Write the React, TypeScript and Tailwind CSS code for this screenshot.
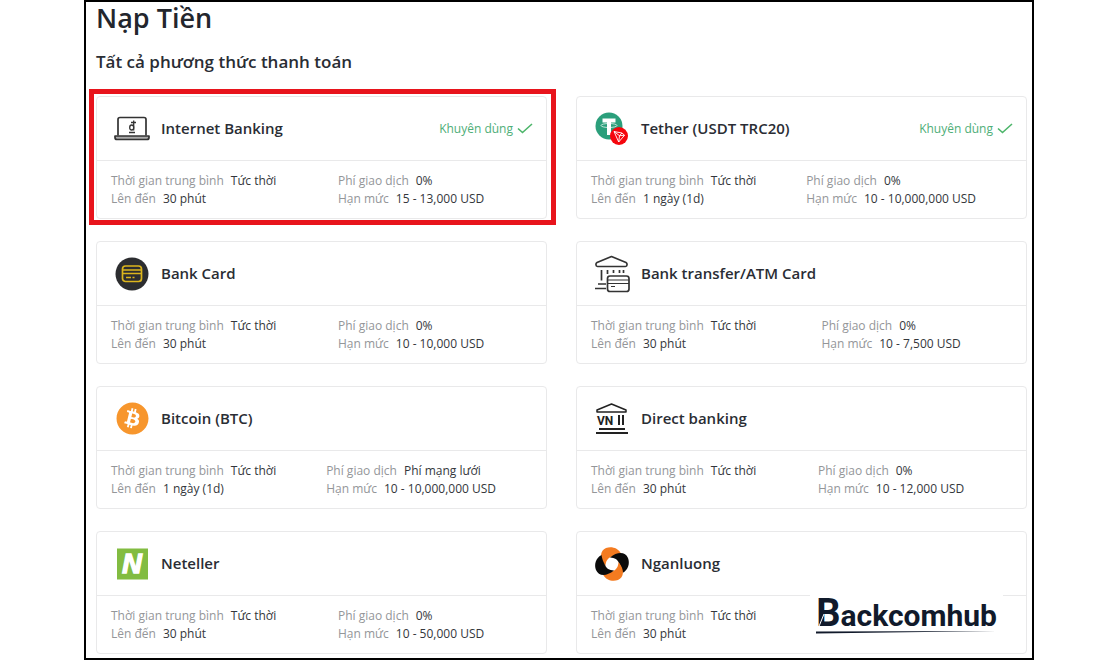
import type { ReactNode } from 'react';
import { FaBitcoin } from 'react-icons/fa';

type Method = {
  name: string;
  icon: ReactNode;
  upTo: string;
  fee?: string;
  limit?: string;
  recommended?: boolean;
  highlighted?: boolean;
};

function LaptopIcon() {
  return (
    <svg viewBox="0 0 36 36" className="h-9 w-9" fill="none" stroke="#333" strokeWidth="1.700">
      <path d="M4 24.5V8.5a2 2 0 0 1 2-2h24a2 2 0 0 1 2 2v16" />
      <path d="M1 25h34v1.500a2 2 0 0 1-2 2H3a2 2 0 0 1-2-2z" fill="#aaa" strokeLinejoin="round" />
      <path d="M19.700 9.500v10M17 11.500h5M15 21.500h6" strokeWidth="1.300" />
      <ellipse cx="17.700" cy="16.500" rx="2" ry="2.500" strokeWidth="1.300" />
    </svg>
  );
}

function TetherIcon() {
  return (
    <svg viewBox="0 0 36 36" className="h-9 w-9">
      <circle cx="15" cy="15" r="13.500" fill="#2b9f7b" />
      <path d="M8.500 7.500h13v4h-4.500v12.500h-4v-12.500h-4.500z" fill="#fff" />
      <ellipse cx="15" cy="14.500" rx="8" ry="2" fill="none" stroke="#fff" strokeWidth=".7" />
      <circle cx="25" cy="25" r="9" fill="#f5060d" />
      <path d="M20 20.500l8 1.500 2.500 2.300-5.800 6.700zM20 20.500l5.500 4.200 5-.4M25.500 24.700l-.8 6.300M25.500 24.700l2.500-2.700" fill="none" stroke="#fff" strokeWidth=".9" strokeLinejoin="round" />
    </svg>
  );
}

function BankCardIcon() {
  return (
    <svg viewBox="0 0 36 36" className="h-9 w-9">
      <circle cx="18" cy="18" r="16.500" fill="#2c2d30" />
      <rect x="8.500" y="10" width="19" height="15.500" rx="3" fill="none" stroke="#dcb51c" strokeWidth="1.700" />
      <path d="M9 14h18M9 17.500h18" stroke="#dcb51c" strokeWidth="1.700" />
      <path d="M12 21.500h5M18.500 21.500h2" stroke="#dcb51c" strokeWidth="1.400" />
    </svg>
  );
}

function BankTransferIcon() {
  return (
    <svg viewBox="0 0 36 38" className="h-[38px] w-9" fill="none" stroke="#333" strokeWidth="1.700">
      <path d="M17.500 1.500L32 7.500c1.500.8 1.500 4-.5 4h-28c-2 0-2-3.200-.5-4z" strokeLinejoin="round" />
      <path d="M7.500 15v10.500M13.500 15v4M19.500 15v3M25.500 15v3M29.500 15v3" />
      <path d="M4 29h8M1 33.500h11" />
      <rect x="13.500" y="21" width="21.500" height="15.500" rx="2.500" fill="#fff" />
      <path d="M13.500 25h21.500M13.500 28.500h21.500M17 31.500h4" strokeWidth="1.200" />
    </svg>
  );
}

function DirectBankIcon() {
  return (
    <svg viewBox="0 0 36 36" className="h-9 w-9" fill="none" stroke="#222" strokeWidth="2">
      <path d="M17.500 3L32 9v2H3V9z" strokeWidth="1.500" strokeLinejoin="round" />
      <text x="3" y="24" fill="#222" stroke="none" fontSize="12" fontWeight="700" fontFamily="Roboto, sans-serif">VN</text>
      <path d="M25 14v10M29 14v10" />
      <path d="M5 28h26M2 32h32" />
    </svg>
  );
}

function NetellerIcon() {
  return (
    <svg viewBox="0 0 36 36" className="h-9 w-9">
      <rect x="3" y="2.500" width="31" height="31" fill="#82bc41" />
      <text x="18" y="27" textAnchor="middle" fill="#fff" stroke="#fff" strokeWidth="1.500" fontSize="27" fontWeight="700" fontStyle="italic" fontFamily="Liberation Sans, sans-serif">N</text>
    </svg>
  );
}

function NganluongIcon() {
  // one blade, repeated every quarter turn
  const blade = 'M27 7.500C24 1.500 17 0 12 2C6 4.500 5 12 11.500 20C11.800 15 13.500 12.500 17 11C20 9.500 23 8 27 7.500Z';
  return (
    <svg viewBox="0 0 36 36" className="h-9 w-9">
      <path d={blade} fill="#f47b20" />
      <path d={blade} fill="#0b0b0b" transform="rotate(90 18 18)" />
      <path d={blade} fill="#f47b20" transform="rotate(180 18 18)" />
      <path d={blade} fill="#0b0b0b" transform="rotate(270 18 18)" />
    </svg>
  );
}

const methods: Method[] = [
  { name: 'Internet Banking', icon: <LaptopIcon />, upTo: '30 phút', fee: '0%', limit: '15 - 13,000 USD', recommended: true, highlighted: true },
  { name: 'Tether (USDT TRC20)', icon: <TetherIcon />, upTo: '1 ngày (1d)', fee: '0%', limit: '10 - 10,000,000 USD', recommended: true },
  { name: 'Bank Card', icon: <BankCardIcon />, upTo: '30 phút', fee: '0%', limit: '10 - 10,000 USD' },
  { name: 'Bank transfer/ATM Card', icon: <BankTransferIcon />, upTo: '30 phút', fee: '0%', limit: '10 - 7,500 USD' },
  { name: 'Bitcoin (BTC)', icon: <FaBitcoin className="h-[33px] w-[33px] text-[#f7962d]" />, upTo: '1 ngày (1d)', fee: 'Phí mạng lưới', limit: '10 - 10,000,000 USD' },
  { name: 'Direct banking', icon: <DirectBankIcon />, upTo: '30 phút', fee: '0%', limit: '10 - 12,000 USD' },
  { name: 'Neteller', icon: <NetellerIcon />, upTo: '30 phút', fee: '0%', limit: '10 - 50,000 USD' },
  { name: 'Nganluong', icon: <NganluongIcon />, upTo: '30 phút' },
];

function Detail({ label, value }: { label: string; value: string }) {
  return (
    <div className="flex gap-[7px] whitespace-nowrap">
      <dt className="text-[#949699]">{label}</dt>
      <dd className="text-[#34373c]">{value}</dd>
    </div>
  );
}

function MethodCard({ method }: { method: Method }) {
  return (
    <li className="relative rounded border border-[#e9e9ea] bg-white">
      <div className="flex h-16 items-center border-b border-[#e9e9ea] pr-[13px] pl-[17px]">
        <span className="flex w-9 shrink-0 justify-center">{method.icon}</span>
        <h3 className="ml-[11px] flex-1 text-[15px] font-semibold text-[#2a2d34]">{method.name}</h3>
        {method.recommended && (
          <span className="flex items-center gap-1 text-[12px] text-[#4eae78]">
            Khuyên dùng
            <svg viewBox="0 0 16 12" className="h-3 w-4" fill="none" stroke="#4db56a" strokeWidth="1.600">
              <path d="M1 5.500l4.500 4L15 1" />
            </svg>
          </span>
        )}
      </div>
      <dl className="flex pt-[11px] pb-[10px] pl-[14px] text-[12px] leading-[18px]">
        <div>
          <Detail label="Thời gian trung bình" value="Tức thời" />
          <Detail label="Lên đến" value={method.upTo} />
        </div>
        {method.fee && method.limit && (
          <div className="flex flex-1 justify-center">
            <div>
              <Detail label="Phí giao dịch" value={method.fee} />
              <Detail label="Hạn mức" value={method.limit} />
            </div>
          </div>
        )}
      </dl>
      {method.highlighted && (
        <div className="pointer-events-none absolute -top-2 -right-[10px] -bottom-[7px] -left-2 border-[5px] border-[#e8141c]" />
      )}
    </li>
  );
}

function Watermark() {
  return (
    <div className="absolute right-[29px] bottom-3 bg-white px-[6px] pb-3">
      <div className="font-[Roboto,sans-serif] text-[30px] leading-[42px] font-bold text-[#111a2b]">
        <span className="text-[38px]">B</span>ackcomhub
      </div>
      <svg viewBox="0 0 180 3" preserveAspectRatio="none" className="-mt-[6px] h-[3px] w-full">
        <path d="M0 .5L180 0L0 2.500z" fill="#111a2b" />
      </svg>
      {/* slash through the foot of the B */}
      <svg viewBox="0 0 10 22" className="absolute bottom-[15px] left-[6px] h-[22px] w-[10px]">
        <path d="M1.500 21L8 5" stroke="#fff" strokeWidth="1" />
      </svg>
    </div>
  );
}

export default function App() {
  return (
    <div className="min-h-screen bg-white pr-[66px] pl-[84px] font-['Open_Sans','Noto_Sans',sans-serif]">
      <main className="relative min-h-screen border-2 border-black pr-[5px] pb-1 pl-[10px]">
        <h1 className="text-[27px] leading-8 font-semibold text-[#23262d]">Nạp Tiền</h1>
        <h2 className="mt-4 text-[17px] leading-6 font-semibold text-[#2a2d34]">Tất cả phương thức thanh toán</h2>
        <ul className="mt-[22px] grid grid-cols-2 gap-x-[29px] gap-y-[22px]">
          {methods.map((m) => (
            <MethodCard key={m.name} method={m} />
          ))}
        </ul>
        <Watermark />
      </main>
    </div>
  );
}
